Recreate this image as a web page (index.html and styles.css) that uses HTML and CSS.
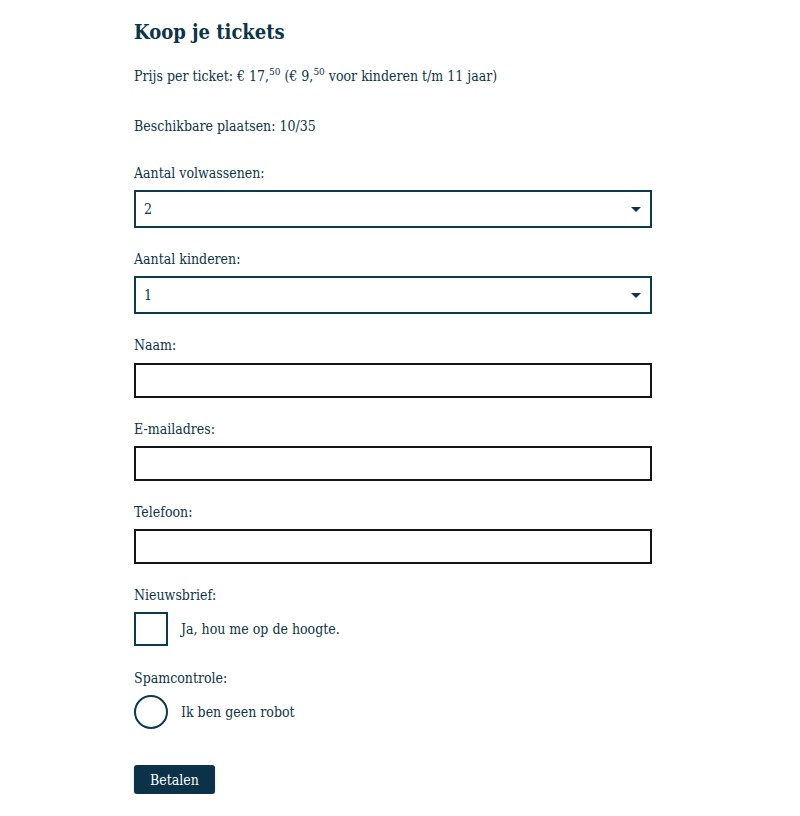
FILE: index.html
```html
<!DOCTYPE html>
<html lang="nl">
<head>
    <meta charset="UTF-8">
    <meta name="viewport" content="width=device-width, initial-scale=1.0">
    <title>Koop je tickets</title>
    <link rel="stylesheet" href="styles.css">
</head>
<body>
    <main class="tickets">
        <h1>Koop je tickets</h1>
        <p>Prijs per ticket: &euro; 17,<sup>50</sup> (&euro; 9,<sup>50</sup> voor kinderen t/m 11 jaar)</p>
        <p class="seats">Beschikbare plaatsen: 10/35</p>

        <form class="order-form">
            <label class="field-label" for="adults">Aantal volwassenen:</label>
            <div class="select-wrap">
                <select id="adults">
                    <option>0</option>
                    <option>1</option>
                    <option selected>2</option>
                    <option>3</option>
                    <option>4</option>
                </select>
            </div>

            <label class="field-label" for="kids">Aantal kinderen:</label>
            <div class="select-wrap">
                <select id="kids">
                    <option>0</option>
                    <option selected>1</option>
                    <option>2</option>
                    <option>3</option>
                </select>
            </div>

            <label class="field-label" for="name">Naam:</label>
            <input type="text" id="name" class="text-input">

            <label class="field-label" for="email">E-mailadres:</label>
            <input type="email" id="email" class="text-input">

            <label class="field-label" for="phone">Telefoon:</label>
            <input type="tel" id="phone" class="text-input">

            <span class="field-label">Nieuwsbrief:</span>
            <label class="choice">
                <input type="checkbox" class="box">
                <span>Ja, hou me op de hoogte.</span>
            </label>

            <span class="field-label">Spamcontrole:</span>
            <label class="choice">
                <input type="radio" class="box round">
                <span>Ik ben geen robot</span>
            </label>

            <button type="submit" class="pay-button">Betalen</button>
        </form>
    </main>
</body>
</html>
```

FILE: styles.css
```css
body {
    margin: 0;
    padding: 0;
    font-family: "DejaVu Serif", "Liberation Serif", serif;
    font-stretch: condensed;
    font-size: 14px;
    color: #0d3447;
    background-color: #ffffff;
}
.tickets {
    width: 518px;
    margin: 0 0 0 134px;
    padding-top: 18px;
}
h1 {
    font-size: 20px;
    line-height: 28px;
    margin: 0 0 18px;
}
p {
    margin: 0 0 26px;
    line-height: 24px;
}
p.seats {
    margin-bottom: 23px;
}
sup {
    font-size: 10px;
    line-height: 0;
}
.order-form {
    display: flex;
    flex-direction: column;
    align-items: flex-start;
}
.field-label {
    display: block;
    line-height: 24px;
    margin-bottom: 5px;
}
.select-wrap {
    position: relative;
    width: 100%;
    margin-bottom: 19px;
}
.select-wrap + .field-label + .text-input {
    margin-top: 1px;
}
.select-wrap::after {
    content: "";
    position: absolute;
    right: 11px;
    top: 17px;
    border-left: 5px solid transparent;
    border-right: 5px solid transparent;
    border-top: 5px solid #0d3447;
    pointer-events: none;
}
select {
    appearance: none;
    width: 100%;
    height: 38px;
    padding: 0 8px;
    border: 2px solid #0d3a4f;
    border-radius: 0;
    background: #fff;
    font: inherit;
    color: inherit;
}
.text-input {
    box-sizing: border-box;
    width: 100%;
    height: 35px;
    margin: 0 0 19px;
    border: 2px solid #151515;
    border-radius: 0;
    font: inherit;
}
.choice {
    display: flex;
    align-items: center;
    gap: 13px;
    margin-bottom: 20px;
}
.box {
    appearance: none;
    width: 34px;
    height: 34px;
    margin: 0;
    border: 2px solid #0d3a4f;
    background: #fff;
}
.box.round {
    border-radius: 50%;
}
.pay-button {
    margin-top: 16px;
    padding: 0 16px;
    height: 29px;
    background-color: #0b3248;
    color: #ffffff;
    border: none;
    border-radius: 3px;
    font: inherit;
    box-shadow: 0 1px 3px rgba(0, 0, 0, 0.15);
    cursor: pointer;
}
```
